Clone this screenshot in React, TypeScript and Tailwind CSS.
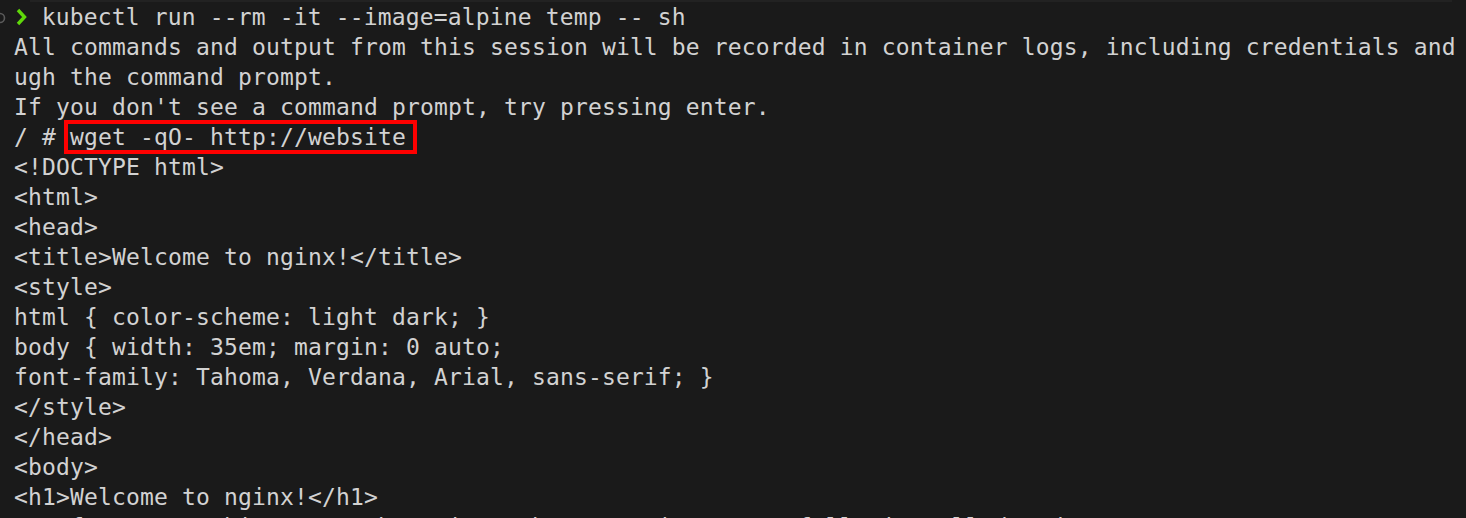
import React from "react";

const lines: string[] = [
  "All commands and output from this session will be recorded in container logs, including credentials and",
  "ugh the command prompt.",
  "If you don't see a command prompt, try pressing enter.",
];

const output: string[] = [
  "<!DOCTYPE html>",
  "<html>",
  "<head>",
  "<title>Welcome to nginx!</title>",
  "<style>",
  "html { color-scheme: light dark; }",
  "body { width: 35em; margin: 0 auto;",
  "font-family: Tahoma, Verdana, Arial, sans-serif; }",
  "</style>",
  "</head>",
  "<body>",
  "<h1>Welcome to nginx!</h1>",
  "<p>If you see this page, the nginx web server is successfully installed and",
];

const App = () => {
  return (
    <div
      className="h-[518px] w-full overflow-hidden bg-[#1a1a1a] text-[#d2d2d2] text-[23px] tracking-[0.15px] leading-[30px] whitespace-pre"
      style={{ fontFamily: '"DejaVu Sans Mono", "Liberation Mono", monospace' }}
    >
      {/* remains of the previous prompt line */}
      <div className="h-[2px] ml-[30px] mr-[14px] bg-[#222222]" />

      <div className="relative pl-[14px]">
        {/* prompt status marker, cut off at the left edge */}
        <svg className="absolute left-[-6px] top-[10px]" width="12" height="12" viewBox="0 0 12 12">
          <circle cx="6" cy="6" r="4.5" fill="none" stroke="#5a5a5a" strokeWidth="1.6" />
        </svg>
        <span className="inline-block w-[13.87px] align-middle">
          <svg width="14" height="18" viewBox="0 0 14 18" className="-mt-[4px]">
            <path d="M4 2 L10.5 9 L4 16" fill="none" stroke="#5fd80a" strokeWidth="3.4" strokeLinejoin="miter" />
          </svg>
        </span>
        {" kubectl run --rm -it --image=alpine temp -- sh"}
      </div>

      <div className="pl-[14px]">
        {lines.map((l, i) => (
          <div key={i}>{l}</div>
        ))}

        <div>
          {"/ # "}
          <span className="border-4 border-[#ff0000] pl-[2px] pr-[7px] ml-[-6px] mr-[-11px]">
            wget -qO- http://website
          </span>
        </div>

        {output.map((l, i) => (
          <div key={i}>{l}</div>
        ))}
      </div>
    </div>
  );
};

export default App;
